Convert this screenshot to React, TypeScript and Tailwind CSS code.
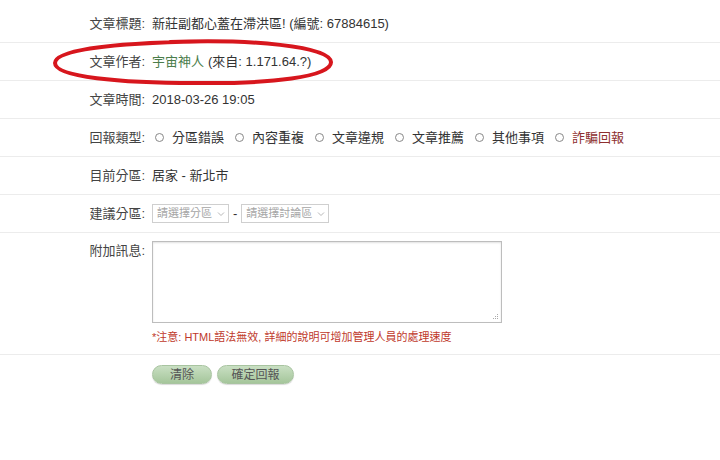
import React from "react"

const font = { fontFamily: '"Liberation Sans", "Noto Sans CJK TC", sans-serif' }

function Row({ label, children, last }: { label: string; children: React.ReactNode; last?: boolean }) {
  return (
    <div className={`flex items-center h-[38px] ${last ? "" : "border-b border-[#ececec]"}`}>
      <div className="w-[145px] text-right text-[#444] shrink-0">{label}</div>
      <div className="pl-[7px] flex items-center">{children}</div>
    </div>
  )
}

function Radio({ text, red }: { text: string; red?: boolean }) {
  return (
    <div className="flex items-center w-[80px] shrink-0">
      <span className="w-[9px] h-[9px] rounded-full border border-[#888] ml-[3px] mr-[8px]" />
      <span className={red ? "text-[#8e2f2f]" : "text-[#333]"}>{text}</span>
    </div>
  )
}

function FakeSelect({ text, width }: { text: string; width: string }) {
  return (
    <div className={`${width} h-[19px] border border-[#cfcfcf] flex items-center justify-between pl-[4px] pr-[3px] text-[11px] text-[#a5a5a5] bg-white whitespace-nowrap overflow-hidden`}>
      <span>{text}</span>
      <svg width="8" height="6" viewBox="0 0 8 6" className="shrink-0">
        <path d="M1 1.5 L4 4.5 L7 1.5" fill="none" stroke="#b8b8b8" strokeWidth="1" />
      </svg>
    </div>
  )
}

export default function App() {
  return (
    <div className="relative w-[720px] h-[460px] bg-white text-[13px] text-[#333] overflow-hidden" style={font}>
      <div className="pt-[5px]">
        <Row label="文章標題:">
          <span>新莊副都心蓋在滯洪區! (編號: 67884615)</span>
        </Row>
        <Row label="文章作者:">
          <span className="text-[#4b7d4b]">宇宙神人</span>
          <span className="ml-[4px]">(來自: 1.171.64.?)</span>
        </Row>
        <Row label="文章時間:">
          <span>2018-03-26 19:05</span>
        </Row>
        <Row label="回報類型:">
          <div className="flex items-center">
            <Radio text="分區錯誤" />
            <Radio text="內容重複" />
            <Radio text="文章違規" />
            <Radio text="文章推薦" />
            <Radio text="其他事項" />
            <Radio text="詐騙回報" red />
          </div>
        </Row>
        <Row label="目前分區:">
          <span>居家 - 新北市</span>
        </Row>
        <Row label="建議分區:">
          <div className="flex items-center">
            <FakeSelect text="請選擇分區" width="w-[77px]" />
            <span className="mx-[4px] text-[#333]">-</span>
            <FakeSelect text="請選擇討論區" width="w-[88px]" />
          </div>
        </Row>

        {/* message */}
        <div className="flex border-b border-[#ececec] h-[122px]">
          <div className="w-[145px] text-right text-[#444] shrink-0 pt-[8px]">附加訊息:</div>
          <div className="pl-[7px] pt-[8px]">
            <div className="relative w-[350px] h-[82px] border border-[#bdbdbd] shadow-[inset_0_1px_2px_rgba(0,0,0,0.12)]">
              <svg width="6" height="6" viewBox="0 0 6 6" className="absolute right-[2px] bottom-[2px]">
                <rect x="4" y="0" width="1" height="1" fill="#aaa" />
                <rect x="2" y="2" width="1" height="1" fill="#aaa" />
                <rect x="4" y="2" width="1" height="1" fill="#aaa" />
                <rect x="0" y="4" width="1" height="1" fill="#aaa" />
                <rect x="2" y="4" width="1" height="1" fill="#aaa" />
                <rect x="4" y="4" width="1" height="1" fill="#aaa" />
              </svg>
            </div>
            <div className="mt-[6px] text-[11px] text-[#c0392b]">*注意: HTML語法無效, 詳細的說明可增加管理人員的處理速度</div>
          </div>
        </div>

        <div className="flex pl-[152px] pt-[10px] gap-[5px]">
          <button className="w-[60px] h-[19px] rounded-full border border-[#a8c4a0] bg-gradient-to-b from-[#c9dfc3] to-[#a5c69b] text-[12px] text-[#555] shadow-[0_1px_1px_rgba(0,0,0,0.15)]">
            清除
          </button>
          <button className="w-[77px] h-[19px] rounded-full border border-[#a8c4a0] bg-gradient-to-b from-[#c9dfc3] to-[#a5c69b] text-[12px] text-[#555] shadow-[0_1px_1px_rgba(0,0,0,0.15)]">
            確定回報
          </button>
        </div>
      </div>

      {/* red hand-drawn highlight */}
      <svg className="absolute left-[50px] top-[37px]" width="286" height="50" viewBox="0 0 286 50">
        <path
          d="M120 5 C200 2 280 9 281 25 C282 40 220 47 145 46 C70 46 5 40 5 26 C5 13 60 6 150 4.5"
          fill="none"
          stroke="#d7161d"
          strokeWidth="4"
          strokeLinecap="round"
        />
      </svg>
    </div>
  )
}
